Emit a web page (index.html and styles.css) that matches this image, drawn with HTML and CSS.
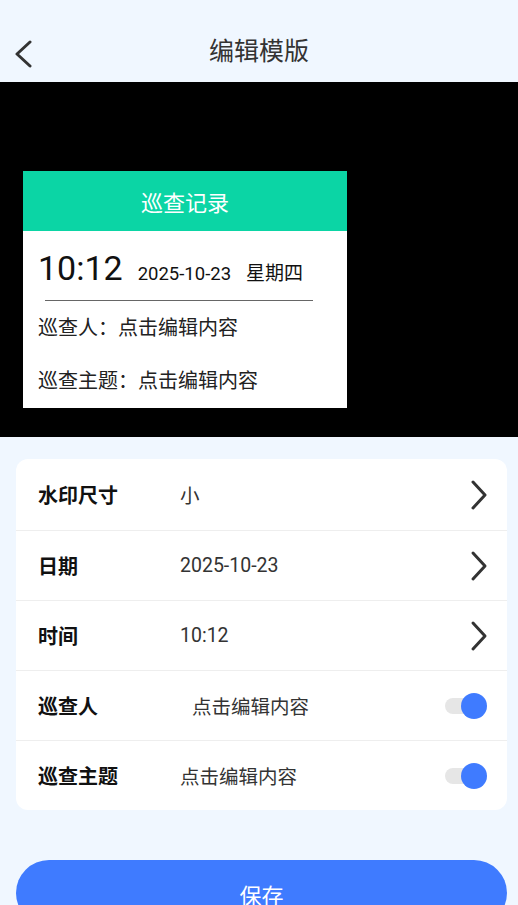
FILE: index.html
```html
<!DOCTYPE html>
<html lang="zh">
<head>
<meta charset="utf-8">
<link rel="stylesheet" href="styles.css">
</head>
<body>
<div class="page">
  <header class="topbar">
    <svg class="back" width="20" height="30" viewBox="0 0 20 30"><polyline points="16,2 3,14 16,26" fill="none" stroke="#333" stroke-width="3" stroke-linecap="round" stroke-linejoin="round"/></svg>
    <div class="title">编辑模版</div>
  </header>
  <section class="preview">
    <div class="wm">
      <div class="wm-head">巡查记录</div>
      <div class="wm-body">
        <div class="wm-time">
          <span class="t">10:12</span>
          <span class="d">2025-10-23</span>
          <span class="w">星期四</span>
        </div>
        <div class="wm-line"></div>
        <div class="wm-row r1">巡查人：点击编辑内容</div>
        <div class="wm-row r2">巡查主题：点击编辑内容</div>
      </div>
    </div>
  </section>
  <section class="settings">
    <div class="row">
      <div class="label">水印尺寸</div>
      <div class="value">小</div>
      <svg class="chev" width="18" height="32" viewBox="0 0 18 32"><polyline points="3,3 15,16 3,29" fill="none" stroke="#333" stroke-width="3" stroke-linecap="round" stroke-linejoin="round"/></svg>
    </div>
    <div class="row">
      <div class="label">日期</div>
      <div class="value">2025-10-23</div>
      <svg class="chev" width="18" height="32" viewBox="0 0 18 32"><polyline points="3,3 15,16 3,29" fill="none" stroke="#333" stroke-width="3" stroke-linecap="round" stroke-linejoin="round"/></svg>
    </div>
    <div class="row">
      <div class="label">时间</div>
      <div class="value">10:12</div>
      <svg class="chev" width="18" height="32" viewBox="0 0 18 32"><polyline points="3,3 15,16 3,29" fill="none" stroke="#333" stroke-width="3" stroke-linecap="round" stroke-linejoin="round"/></svg>
    </div>
    <div class="row">
      <div class="label">巡查人</div>
      <div class="value shift">点击编辑内容</div>
      <div class="toggle"><span class="knob"></span></div>
    </div>
    <div class="row">
      <div class="label">巡查主题</div>
      <div class="value">点击编辑内容</div>
      <div class="toggle"><span class="knob"></span></div>
    </div>
  </section>
  <div class="btn-wrap">
    <button class="save">保存</button>
  </div>
</div>
</body>
</html>
```
FILE: styles.css
```css
* { box-sizing: border-box; }
html, body { margin: 0; padding: 0; }
body {
  background: #f0f7ff;
  font-family: Roboto, "Noto Sans CJK SC", sans-serif;
  color: #222;
  overflow: hidden;
}
.page { width: 518px; height: 905px; overflow: hidden; }
.topbar {
  height: 82px;
  display: flex;
  align-items: center;
  justify-content: center;
  position: relative;
  padding-top: 22px;
}
.back { position: absolute; left: 14px; top: 40px; }
.title { font-size: 25px; color: #333; line-height: 32px; }
.preview {
  height: 355px;
  background: #000;
  padding: 89px 0 0 23px;
}
.wm { width: 324px; }
.wm-head {
  height: 60px;
  background: #0bd5a5;
  color: #fff;
  font-size: 22px;
  display: flex;
  align-items: center;
  justify-content: center;
}
.wm-body {
  background: #fff;
  height: 177px;
  padding: 0 0 0 15px;
}
.wm-time {
  display: flex;
  align-items: baseline;
  height: 69px;
  padding-top: 17px;
}
.wm-time .t { font-size: 34px; color: #111; line-height: 40px; }
.wm-time .d { font-size: 18.5px; margin-left: 15px; color: #111; }
.wm-time .w { font-size: 19px; margin-left: 15px; color: #111; }
.wm-line { width: 268px; height: 1px; background: #666; margin-left: 7px; }
.wm-row { font-size: 20px; color: #222; line-height: 28px; }
.wm-row.r1 { margin-top: 13px; }
.wm-row.r2 { margin-top: 25px; }
.settings {
  margin: 22px 11px 0 16px;
  background: #fff;
  border-radius: 12px;
  overflow: hidden;
}
.row {
  height: 70px;
  display: flex;
  align-items: center;
  padding: 0 20px 0 22px;
  border-top: 1px solid #eeeeee;
}
.row:first-child { border-top: none; height: 71px; }
.label { width: 142px; font-size: 20px; font-weight: 700; color: #111; }
.value { flex: 1; font-size: 19.5px; color: #333; }
.value.shift { padding-left: 12px; }
.chev { display: block; margin-right: -1px; }
.toggle {
  width: 44px;
  height: 26px;
  position: relative;
  margin-right: 0;
}
.toggle::before {
  content: "";
  position: absolute;
  left: 2px;
  top: 5px;
  width: 34px;
  height: 16px;
  border-radius: 8px;
  background: #e6e6e6;
}
.knob {
  position: absolute;
  right: 0;
  top: 0;
  width: 26px;
  height: 26px;
  border-radius: 50%;
  background: #3f7bff;
}
.btn-wrap { padding: 50px 11px 0 16px; }
.save {
  width: 100%;
  height: 66px;
  border: none;
  border-radius: 33px;
  background: #3f7bff;
  color: #fff;
  font-family: Roboto, "Noto Sans CJK SC", sans-serif;
  font-size: 22px;
  padding: 0;
  padding-top: 2px;
}
```
